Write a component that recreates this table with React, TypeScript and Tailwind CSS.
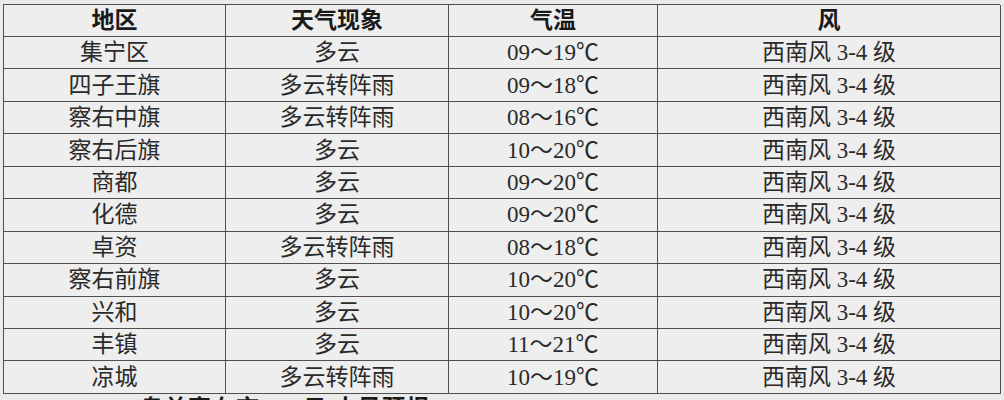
import React from 'react';

type Row = { area: string; weather: string; temp: string; wind: string };

const rows: Row[] = [
  { area: '集宁区', weather: '多云', temp: '09～19℃', wind: '西南风 3-4 级' },
  { area: '四子王旗', weather: '多云转阵雨', temp: '09～18℃', wind: '西南风 3-4 级' },
  { area: '察右中旗', weather: '多云转阵雨', temp: '08～16℃', wind: '西南风 3-4 级' },
  { area: '察右后旗', weather: '多云', temp: '10～20℃', wind: '西南风 3-4 级' },
  { area: '商都', weather: '多云', temp: '09～20℃', wind: '西南风 3-4 级' },
  { area: '化德', weather: '多云', temp: '09～20℃', wind: '西南风 3-4 级' },
  { area: '卓资', weather: '多云转阵雨', temp: '08～18℃', wind: '西南风 3-4 级' },
  { area: '察右前旗', weather: '多云', temp: '10～20℃', wind: '西南风 3-4 级' },
  { area: '兴和', weather: '多云', temp: '10～20℃', wind: '西南风 3-4 级' },
  { area: '丰镇', weather: '多云', temp: '11～21℃', wind: '西南风 3-4 级' },
  { area: '凉城', weather: '多云转阵雨', temp: '10～19℃', wind: '西南风 3-4 级' },
];

const headers = ['地区', '天气现象', '气温', '风'];

const cell = 'flex items-center justify-center border-r-[1.5px] border-b-[1.5px] border-[#505050] leading-none';

export default function App() {
  return (
    <div
      className="w-[1004px] h-[400px] overflow-hidden bg-[#ebebeb] text-[#2a2a2a] text-[23px]"
      style={{ fontFamily: '"Liberation Serif", "Noto Sans CJK SC", serif' }}
    >
      <div className="pl-[3px] pt-[4px]">
        <div className="grid w-[997px] grid-cols-[222px_223px_209px_343px] border-l-[1.5px] border-t-[1.5px] border-[#505050] bg-[#eeeeee]">
          {headers.map((h) => (
            <div key={h} className={`${cell} h-[32px] font-bold text-[#1a1a1a]`}>
              {h}
            </div>
          ))}
          {rows.map((r) => (
            <React.Fragment key={r.area}>
              <div className={`${cell} h-[32.45px]`}>{r.area}</div>
              <div className={`${cell} h-[32.45px]`}>{r.weather}</div>
              <div className={`${cell} h-[32.45px]`}>{r.temp}</div>
              <div className={`${cell} h-[32.45px]`}>{r.wind}</div>
            </React.Fragment>
          ))}
        </div>
        <div className="pl-[137px] pt-[3px] leading-none font-bold text-[#1a1a1a] tracking-[1px]">
          乌兰察布市 　4日 大风预报
        </div>
      </div>
    </div>
  );
}
